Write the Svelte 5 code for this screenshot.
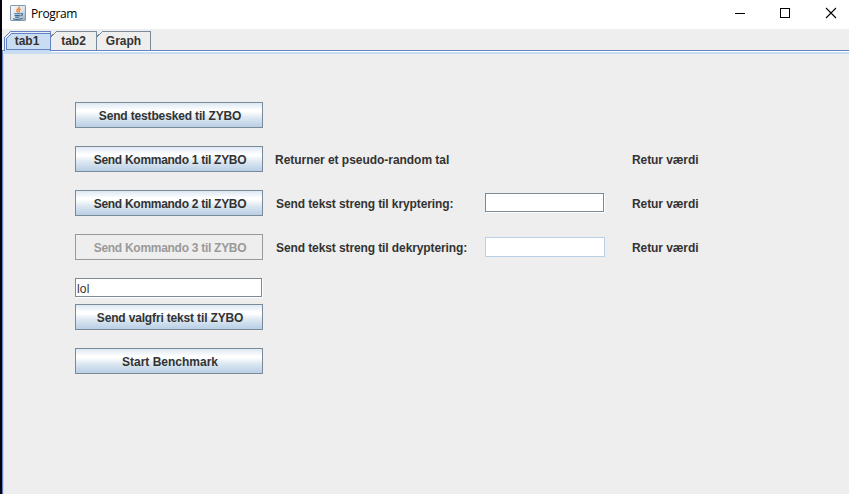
<script>
  let tabs = ['tab1', 'tab2', 'Graph'];
  let selected = $state(0);
  const widths = [47, 46, 54];
  let free = $state('lol');
</script>

<div class="window">
  <header>
    <svg class="java" width="16" height="16" viewBox="0 0 16 16">
      <defs>
        <linearGradient id="tile" x1="0" y1="0" x2="1" y2="1">
          <stop offset="0" stop-color="#fafbfc" />
          <stop offset="0.55" stop-color="#dbe3ea" />
          <stop offset="1" stop-color="#93a8ba" />
        </linearGradient>
      </defs>
      <rect x="0.5" y="0.5" width="15" height="15" rx="0.6" fill="url(#tile)" stroke="#8397aa" />
      <path d="M9.3 1.6c.5 2.2-3.4 2.6-2.4 4.5l1 1.3M10.6 3.8C8.8 4.7 8.7 5.5 9.3 6.3c.3.5 0 .9-.4 1.3" fill="none" stroke="#f08024" stroke-width="1.4" />
      <path d="M4.2 8.7h6.2M4.6 10.6h5.2M5.2 12.2h4M10.8 8.6c2.6-.6 2 1.8-.4 2.3M3 13.7c2.7 1 7.5.8 9.4-.4" fill="none" stroke="#386894" stroke-width="1.1" />
    </svg>
    <span class="title">Program</span>
    <svg class="controls" width="110" height="12" viewBox="0 0 110 12" fill="none" stroke="#000">
      <path d="M0 6.5h10" shape-rendering="crispEdges" />
      <path d="M45.5 1.5h9v9h-9z" shape-rendering="crispEdges" />
      <path d="M91 1l10 10M101 1l-10 10" stroke-width="1.1" />
    </svg>
  </header>

  <nav>
    {#each tabs as tab, i}
      <button class="tab" class:active={selected === i} style:width="{widths[i]}px" onclick={() => (selected = i)}>
        <svg width={widths[i]} height="22" shape-rendering="crispEdges">
          {#if selected === i}
            <path d="M0 22V6L6 0H{widths[i]}V22z" fill="#c8ddf2" />
            <path d="M1.5 19V7L7 1.5H{widths[i] - 1}" fill="none" stroke="#e6f0fa" />
            <path d="M.5 20V6.5L6.5 .5H{widths[i] - 0.5}V20" fill="none" stroke="#6382bf" />
            <path d="M2.5 18.5V7.5L7.5 2.5H{widths[i] - 1}M2.5 18.5H{widths[i] - 1}" fill="none" stroke="#6382bf" />
          {:else}
            <path d="M0 5.5L5.5 .5H{widths[i] - 0.5}V19" fill="none" stroke="#7a8a99" />
          {/if}
        </svg>
        <span class="label">{tab}</span>
      </button>
    {/each}
  </nav>

  <main>
    <div class="row">
      <button class="btn"><span class="test">Send testbesked til ZYBO</span></button>
    </div>
    <div class="row">
      <button class="btn"><span class="command">Send Kommando 1 til ZYBO</span></button>
      <span class="text first">Returner et pseudo-random tal</span>
      <span class="result">Retur værdi</span>
    </div>
    <div class="row">
      <button class="btn"><span class="command">Send Kommando 2 til ZYBO</span></button>
      <span class="text">Send tekst streng til kryptering:</span>
      <input class="field small" aria-label="Kryptering" />
      <span class="result">Retur værdi</span>
    </div>
    <div class="row">
      <button class="btn" disabled><span class="command">Send Kommando 3 til ZYBO</span></button>
      <span class="text">Send tekst streng til dekryptering:</span>
      <input class="field small off" aria-label="Dekryptering" disabled />
      <span class="result">Retur værdi</span>
    </div>
    <input class="field wide" bind:value={free} aria-label="Tekst" />
    <div class="row">
      <button class="btn"><span class="custom">Send valgfri tekst til ZYBO</span></button>
    </div>
    <div class="row">
      <button class="btn"><span>Start Benchmark</span></button>
    </div>
  </main>
</div>

<style>
  :global(body) {
    margin: 0;
    background: #eee;
    overflow: hidden;
  }
  .window {
    box-sizing: border-box;
    width: 849px;
    height: 494px;
    display: flex;
    flex-direction: column;
    border-left: 2px solid #05030f;
    background: #eee;
    color: #333;
    font: bold 12px/16px "Liberation Sans", Arial, sans-serif;
  }
  header {
    box-sizing: border-box;
    height: 29px;
    flex: none;
    display: flex;
    align-items: flex-start;
    padding: 5px 0 0 8px;
    background: #fff;
    color: #000;
  }
  .title {
    margin-left: 5px;
    padding-top: 1px;
    font: 12px/16px "Open Sans", "Noto Sans", sans-serif;
    letter-spacing: -0.35px;
  }
  .controls {
    margin: 2px 4px 0 auto;
  }
  nav {
    display: flex;
    height: 21px;
    flex: none;
    box-sizing: border-box;
    padding: 2px 0 0 2px;
  }
  .tab {
    position: relative;
    flex: none;
    height: 19px;
    padding: 0;
    border: 0;
    background: none;
    color: #333;
    font: inherit;
  }
  .active {
    z-index: 1;
  }
  .tab svg {
    position: absolute;
    left: 0;
    top: 0;
  }
  .label {
    position: relative;
    display: block;
    height: 19px;
    line-height: 21px;
    text-align: center;
    padding-right: 1px;
  }
  main {
    flex: 1;
    display: flex;
    flex-direction: column;
    border-top: 1px solid #6382bf;
    border-left: 1px solid #6382bf;
    box-shadow: inset 0 1px #fff, inset 1px 0 #c8ddf2, inset 0 3px #c8ddf2;
    padding: 51px 0 0 72px;
  }
  .row {
    display: flex;
    align-items: center;
    height: 26px;
    margin-bottom: 18px;
    flex: none;
  }
  .btn {
    box-sizing: border-box;
    width: 188px;
    height: 26px;
    flex: none;
    padding: 1px 0 0 2px;
    border: 1px solid #7a8a99;
    background: linear-gradient(#dde8f3 0, #fff 30%, #fff 36%, #dce7f1 62%, #b8cfe5 100%);
    color: #333;
    font: inherit;
    white-space: nowrap;
  }
  .btn:disabled {
    border-color: #999;
    background: #eee;
    color: #999;
  }
  .test {
    letter-spacing: -0.15px;
  }
  .command {
    letter-spacing: -0.28px;
  }
  .custom {
    letter-spacing: -0.16px;
  }
  .text {
    width: 209px;
    margin-left: 13px;
    padding-top: 1px;
    white-space: nowrap;
    letter-spacing: -0.1px;
  }
  .text.first {
    margin-left: 12px;
    width: 357px;
    letter-spacing: -0.04px;
  }
  .result {
    padding-top: 1px;
    white-space: nowrap;
    letter-spacing: -0.08px;
  }
  .field {
    box-sizing: border-box;
    border: 1px solid #7a8a99;
    border-radius: 0;
    background: #fff;
    box-shadow: 1px 1px #fff;
    outline: none;
    padding: 2px 1px 0;
    color: #333;
    font: 12px/16px "Liberation Sans", Arial, sans-serif;
    letter-spacing: 0.2px;
  }
  .small {
    width: 119px;
    height: 19px;
    margin: 0 28px 1px 0;
  }
  .off {
    width: 120px;
    height: 20px;
    margin: 0 27px 0 0;
    border-color: #b8cfe5;
    box-shadow: none;
  }
  .wide {
    width: 187px;
    height: 19px;
    flex: none;
    margin-bottom: 7px;
  }
</style>
